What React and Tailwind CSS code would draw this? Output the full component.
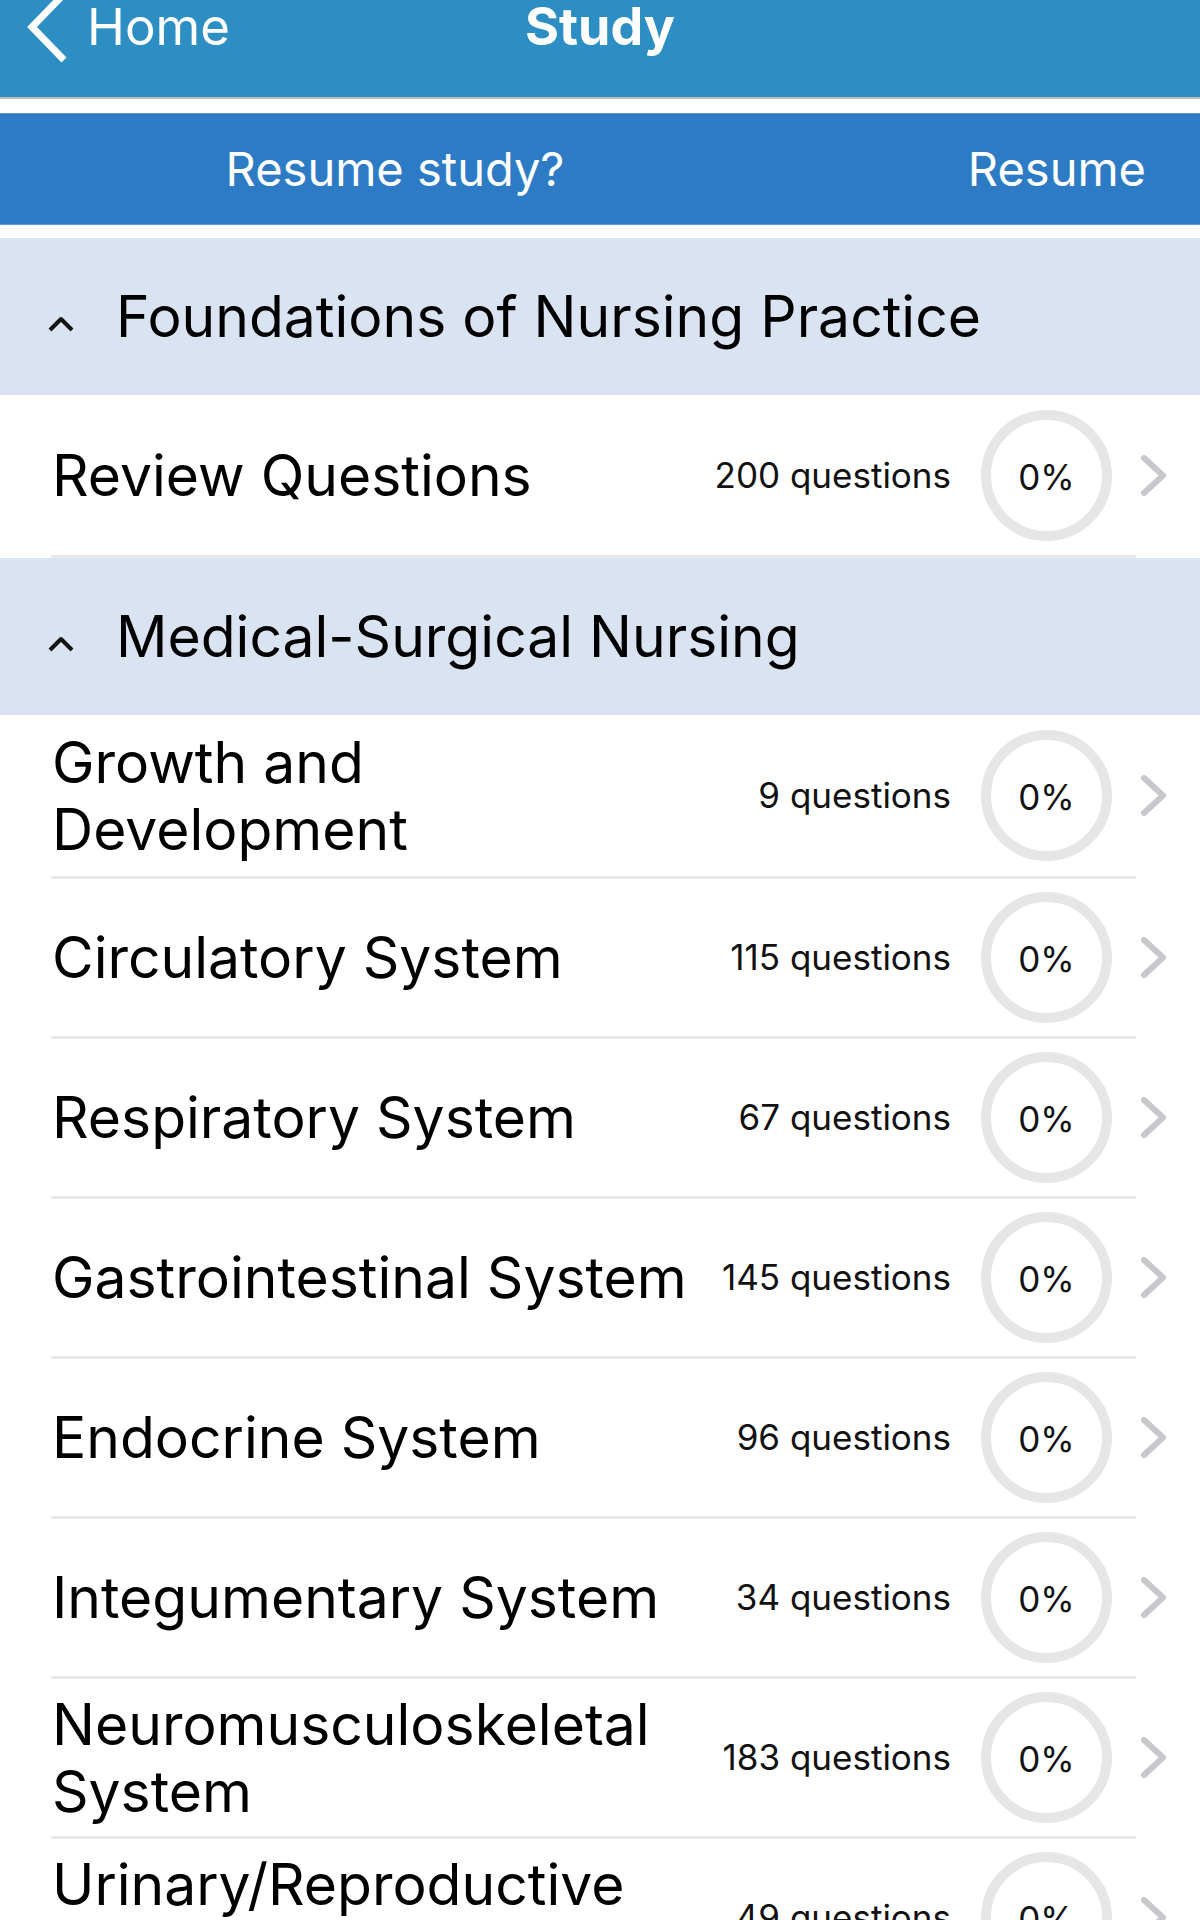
import React from "react";

const font = { fontFamily: "Inter, 'Noto Sans', sans-serif" };

const sections = [
  {
    title: "Foundations of Nursing Practice",
    items: [{ lines: ["Review Questions"], count: 200, h: "h-[163px]" }],
  },
  {
    title: "Medical-Surgical Nursing",
    items: [
      { lines: ["Growth and", "Development"], count: 9, h: "h-[164px]" },
      { lines: ["Circulatory System"], count: 115 },
      { lines: ["Respiratory System"], count: 67 },
      { lines: ["Gastrointestinal System"], count: 145 },
      { lines: ["Endocrine System"], count: 96 },
      { lines: ["Integumentary System"], count: 34 },
      { lines: ["Neuromusculoskeletal", "System"], count: 183 },
      { lines: ["Urinary/Reproductive", "System"], count: 49 },
    ],
  },
];

function ChevronRight() {
  return (
    <svg width="27" height="41" viewBox="0 0 27 41" fill="none">
      <polyline
        points="4,3 23,20.5 4,38"
        stroke="#c8c8cc"
        strokeWidth="6"
        strokeLinecap="round"
        strokeLinejoin="round"
      />
    </svg>
  );
}

function Row({ item }) {
  return (
    <div className={`flex ${item.h || "h-[160px]"}`}>
      {/* inset content with separator */}
      <div className="ml-[51px] flex flex-1 items-center border-b-[3px] border-[#e8e8e8] pr-[24px]">
        <div className="flex-1 pl-[1px] text-[57px] leading-[67px] text-black">
          {item.lines.map((l) => (
            <div key={l} className="whitespace-nowrap">{l}</div>
          ))}
        </div>
        <span className="whitespace-nowrap text-[35px] text-[#111]">{item.count} questions</span>
        <div className="ml-[30px] flex h-[131px] w-[131px] shrink-0 items-center justify-center rounded-full border-[10px] border-[#e6e6e6]">
          <span className="mt-[4px] text-[35px] text-[#111]">0%</span>
        </div>
      </div>
      <div className="flex w-[64px] items-center pl-[4px] pb-[3px]">
        <ChevronRight />
      </div>
    </div>
  );
}

function Section({ section }) {
  return (
    <div>
      <div className="flex h-[157px] items-center bg-[#dae3f1]">
        <svg className="ml-[47px] mt-[14px]" width="28" height="18" viewBox="0 0 28 18" fill="none">
          <polyline points="3,15 14,4 25,15" stroke="#111" strokeWidth="4" strokeLinejoin="round" />
        </svg>
        <span className="ml-[41px] text-[57px] text-black">{section.title}</span>
      </div>
      {section.items.map((it) => (
        <Row key={it.lines.join(" ")} item={it} />
      ))}
    </div>
  );
}

export default function App() {
  return (
    <div className="h-[1920px] w-[1200px] overflow-hidden bg-white" style={font}>
      {/* Nav bar */}
      <div className="h-[99px] overflow-hidden border-b-2 border-[#bdbdbd] bg-[#2c8ec2]">
        <div className="grid grid-cols-3 items-start text-white">
          <div className="flex items-start">
            <svg className="-mt-[9px] ml-[26px] shrink-0" width="42" height="72" viewBox="0 0 42 72" fill="none">
              <polyline points="38,3 6,36 38,69" stroke="white" strokeWidth="7" strokeLinejoin="miter" />
            </svg>
            <span className="ml-[19px] text-[51px] leading-[54px]">Home</span>
          </div>
          <div className="text-center text-[52px] font-bold leading-[54px]">Study</div>
          <div />
        </div>
      </div>

      {/* Resume bar */}
      <div className="mt-[14px] grid h-[112px] grid-cols-[790px_1fr] items-center border-y border-[#5b9ad7] bg-[#2e7bc5] text-[47px] text-white">
        <div className="text-center">Resume study?</div>
        <div className="pr-[54px] text-right">Resume</div>
      </div>

      <div className="mt-[13px]">
        {sections.map((s) => (
          <Section key={s.title} section={s} />
        ))}
      </div>
    </div>
  );
}
